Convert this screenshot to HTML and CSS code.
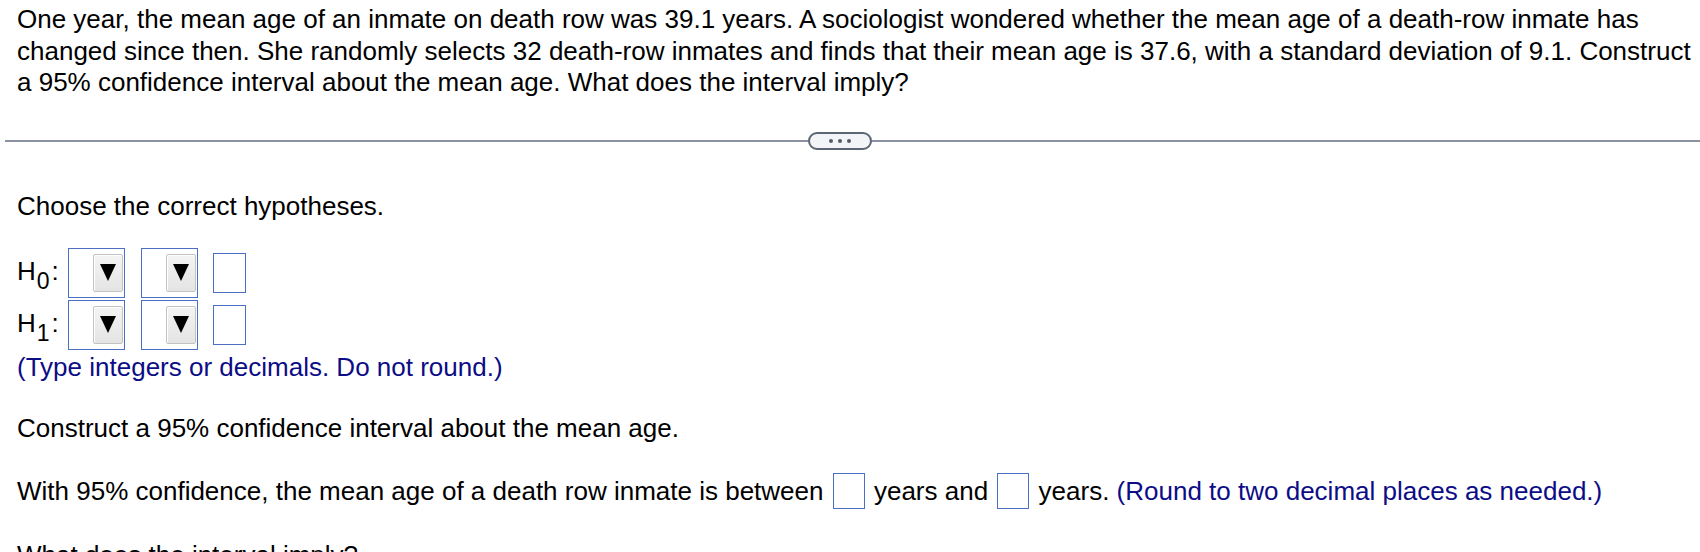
FILE: index.html
```html
<!DOCTYPE html>
<html>
<head>
<meta charset="utf-8">
<link rel="stylesheet" href="styles.css">
</head>
<body>
<div class="page">
  <p class="question">One year, the mean age of an inmate on death row was 39.1 years. A sociologist wondered whether the mean age of a death-row inmate has changed since then. She randomly selects 32 death-row inmates and finds that their mean age is 37.6, with a standard deviation of 9.1. Construct a 95% confidence interval about the mean age. What does the interval imply?</p>

  <div class="divider">
    <span class="rule rule-left"></span>
    <span class="more"><i></i><i></i><i></i></span>
    <span class="rule rule-right"></span>
  </div>

  <p class="prompt">Choose the correct hypotheses.</p>

  <div class="hyps">
    <div class="hrow">
      <span class="hlabel">H<sub>0</sub>:</span>
      <span class="sel"><span class="btn"><span class="tri"></span></span></span>
      <span class="sel"><span class="btn"><span class="tri"></span></span></span>
      <span class="box"></span>
    </div>
    <div class="hrow">
      <span class="hlabel">H<sub>1</sub>:</span>
      <span class="sel"><span class="btn"><span class="tri"></span></span></span>
      <span class="sel"><span class="btn"><span class="tri"></span></span></span>
      <span class="box"></span>
    </div>
  </div>

  <p class="note">(Type integers or decimals. Do not round.)</p>

  <p class="construct">Construct a 95% confidence interval about the mean age.</p>

  <p class="answer">With 95% confidence, the mean age of a death row inmate is between <span class="ibox"></span> years and <span class="ibox"></span> years. <span class="hint">(Round to two decimal places as needed.)</span></p>

  <p class="implies">What does the interval imply?</p>
</div>
</body>
</html>
```

FILE: styles.css
```css
html, body {
  margin: 0;
  padding: 0;
  background: #ffffff;
}

.page {
  padding: 4px 4px 0 17px;
  font-family: "Liberation Sans", Arial, sans-serif;
  font-size: 26px;
  line-height: 31.5px;
  color: #000000;
  overflow: hidden;
  height: 552px;
  box-sizing: border-box;
}

p {
  margin: 0;
}

.divider {
  display: flex;
  align-items: center;
  margin: 33px -4px 0 -12px;
  height: 18px;
}

.rule {
  height: 2px;
  background: #8a91a2;
}

.rule-left {
  width: 803px;
  flex: none;
}

.rule-right {
  flex: 1;
}

.more {
  flex: none;
  width: 64px;
  height: 18px;
  box-sizing: border-box;
  border: 2px solid #5c6573;
  border-radius: 9px;
  background: #f3f4f7;
  display: flex;
  align-items: center;
  justify-content: center;
  gap: 5px;
}

.more i {
  display: block;
  width: 4px;
  height: 4px;
  border-radius: 50%;
  background: #555d69;
}

.prompt {
  margin-top: 41px;
}

.hyps {
  margin-top: 26px;
  display: flex;
  flex-direction: column;
  gap: 2px;
}

.hrow {
  display: flex;
  align-items: center;
  height: 50px;
}

.hlabel {
  width: 51px;
  flex: none;
  font-size: 26px;
  line-height: 30px;
  margin-top: -4px;
}

.hlabel sub {
  font-size: 23px;
  vertical-align: -9px;
  line-height: 0;
  margin-left: 1px;
  margin-right: 2px;
}

.sel {
  flex: none;
  width: 57px;
  height: 50px;
  box-sizing: border-box;
  border: 1.5px solid #4a6fc3;
  background: #ffffff;
  display: flex;
  align-items: center;
  justify-content: flex-end;
  padding-right: 1px;
  margin-right: 16px;
}

.sel + .sel {
  margin-right: 15px;
}

.btn {
  width: 30px;
  height: 38px;
  box-sizing: border-box;
  border: 1.5px solid #c3c3c3;
  border-radius: 2px;
  background: linear-gradient(#f4f4f4, #e4e4e4);
  box-shadow: inset 1px 1px 0 #ffffff;
  display: flex;
  align-items: center;
  justify-content: center;
}

.tri {
  width: 0;
  height: 0;
  border-left: 8.5px solid transparent;
  border-right: 8.5px solid transparent;
  border-top: 17px solid #000000;
  margin-top: -2px;
}

.box {
  flex: none;
  width: 33px;
  height: 40px;
  box-sizing: border-box;
  border: 1.5px solid #4a6fc3;
  background: #ffffff;
}

.note {
  margin-top: 2px;
  color: #0c0c86;
}

.construct {
  margin-top: 29px;
}

.answer {
  margin-top: 29px;
  line-height: 37px;
  white-space: nowrap;
}

.ibox {
  display: inline-block;
  vertical-align: middle;
  width: 32px;
  height: 36px;
  box-sizing: border-box;
  border: 1.5px solid #4a6fc3;
  margin: -4px 2px 0;
}

.hint {
  color: #0c0c86;
}

.implies {
  margin-top: 30px;
}
```
